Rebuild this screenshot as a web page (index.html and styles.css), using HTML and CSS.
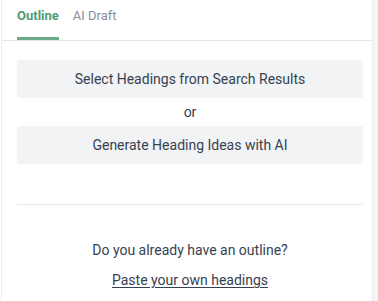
FILE: index.html
```html
<!DOCTYPE html>
<html>
<head>
<meta charset="utf-8">
<link rel="stylesheet" href="styles.css">
</head>
<body>
<div class="frame">
  <div class="panel">
    <div class="tabs">
      <div class="tab active">Outline</div>
      <div class="tab">AI Draft</div>
    </div>
    <div class="content">
      <button class="action">Select Headings from Search Results</button>
      <div class="or">or</div>
      <button class="action">Generate Heading Ideas with AI</button>
      <div class="divider"></div>
      <p class="question">Do you already have an outline?</p>
      <a class="paste" href="#">Paste your own headings</a>
    </div>
  </div>
  <div class="strip"></div>
</div>
</body>
</html>
```
FILE: styles.css
```css
html, body {
  margin: 0;
  padding: 0;
  background: #ffffff;
  font-family: Roboto, "Liberation Sans", sans-serif;
  color: #374151;
}
.frame {
  display: flex;
  height: 301px;
}
.panel {
  width: 370px;
  margin-left: 1px;
  border-left: 1px solid #eceef1;
  border-right: 1px solid #e9ebee;
  display: flex;
  flex-direction: column;
}
.strip {
  flex: 1;
  background: #f4f5f7;
}
.tabs {
  display: flex;
  gap: 14px;
  padding: 0 15px;
  border-bottom: 1px solid #e5e7eb;
  height: 40px;
}
.tab {
  font-size: 13px;
  line-height: 30px;
  padding-top: 1px;
  color: #8a8f98;
  border-bottom: 3px solid transparent;
  box-sizing: border-box;
  height: 40px;
  padding-top: 1px;
}
.tab.active {
  color: #4c9a73;
  font-weight: 700;
  border-bottom-color: #6aaa88;
}
.content {
  padding: 19px 9px 0 15px;
  display: flex;
  flex-direction: column;
  align-items: center;
}
.action {
  width: 100%;
  height: 38px;
  border: none;
  border-radius: 3px;
  background: #f2f3f5;
  font-family: Roboto, "Liberation Sans", sans-serif;
  font-size: 14px;
  color: #374151;
  padding: 0;
}
.or {
  font-size: 14px;
  line-height: 28px;
  color: #374151;
}
.divider {
  align-self: stretch;
  height: 1px;
  background: #e5e7eb;
  margin-top: 40px;
}
.question {
  margin: 36px 0 0;
  font-size: 14px;
  line-height: 18px;
}
.paste {
  margin-top: 12px;
  font-size: 14px;
  line-height: 18px;
  color: #374151;
  text-decoration: underline;
  text-underline-offset: 2px;
}
```
